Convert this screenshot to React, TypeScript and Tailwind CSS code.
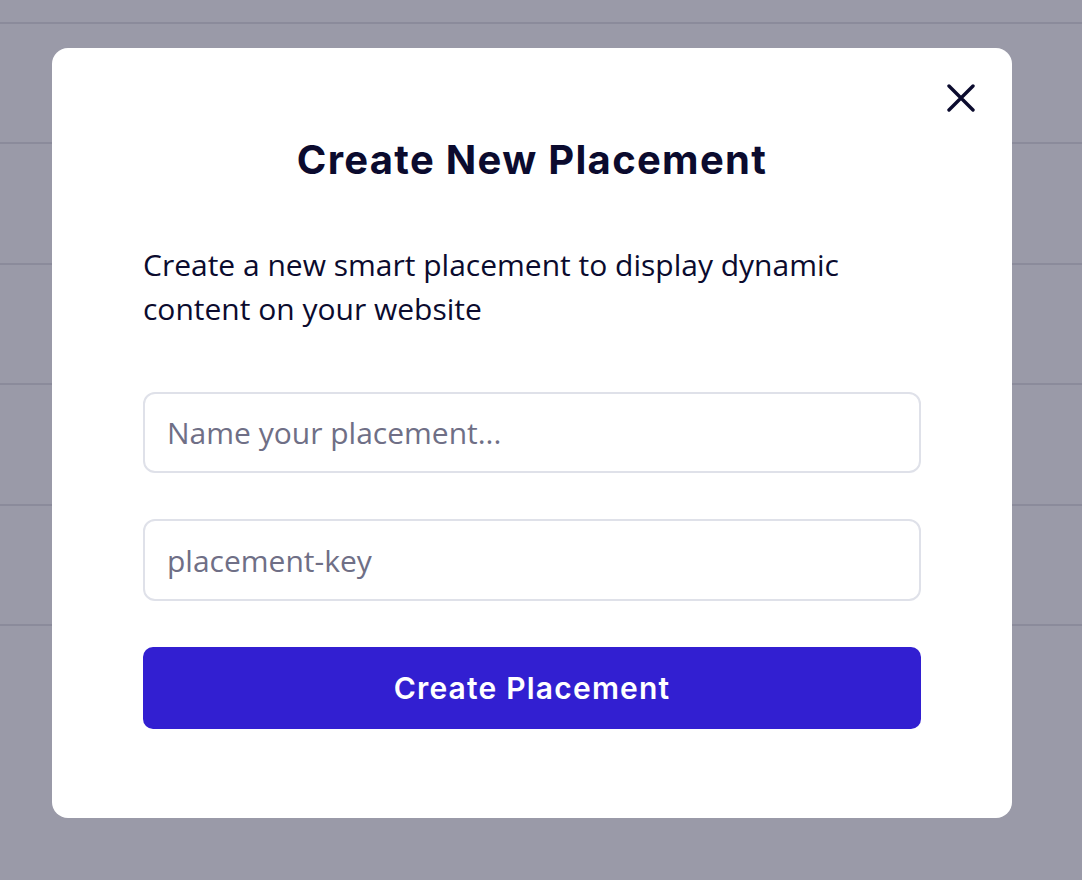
const rows = [0, 1, 2, 3, 4, 5];

export default function App() {
  return (
    <div className="relative h-[880px] w-[1082px] overflow-hidden bg-[#9a9aa8]">
      {/* table rows behind the overlay */}
      <div className="flex flex-col pt-[22px]">
        {rows.map((r) => (
          <div key={r} className="h-[120.4px] border-t-2 border-[#8b8b9b]" />
        ))}
      </div>

      <div className="absolute inset-0 flex items-start justify-start pl-[52px] pt-[48px]">
        <div className="relative h-[770px] w-[960px] rounded-[16px] bg-white px-[91px] pt-[88px] font-['Open_Sans',sans-serif] text-[#0b0b2e]">
          <button className="absolute right-[37px] top-[36px] text-[#0b0b2e]">
            <svg width="28" height="28" viewBox="0 0 28 28" fill="none" stroke="currentColor" strokeWidth="3.4" strokeLinecap="round">
              <path d="M2 2 L26 26 M26 2 L2 26" />
            </svg>
          </button>

          <h2 className="text-center font-['Inter',sans-serif] text-[40px] font-bold leading-[48px] tracking-[1.3px] text-[#0b0b2e]">
            Create New Placement
          </h2>

          <p className="mt-[59px] text-[30px] leading-[44px] text-[#0b0b2e]">
            Create a new smart placement to display dynamic content on your website
          </p>

          <div className="mt-[61px] flex flex-col gap-[46px]">
            <input
              placeholder="Name your placement..."
              className="h-[81px] w-full rounded-[12px] border-2 border-[#dfe1e9] px-[22px] text-[30px] text-[#0b0b2e] outline-none placeholder:text-[#6f6f86]"
            />
            <input
              placeholder="placement-key"
              className="h-[82px] w-full rounded-[12px] border-2 border-[#dfe1e9] px-[22px] text-[30px] text-[#0b0b2e] outline-none placeholder:text-[#6f6f86]"
            />
          </div>

          <button className="mt-[46px] h-[82px] w-full rounded-[10px] bg-[#321fd1] font-['Inter',sans-serif] text-[30px] font-semibold tracking-[1.2px] text-white">
            Create Placement
          </button>
        </div>
      </div>
    </div>
  );
}
